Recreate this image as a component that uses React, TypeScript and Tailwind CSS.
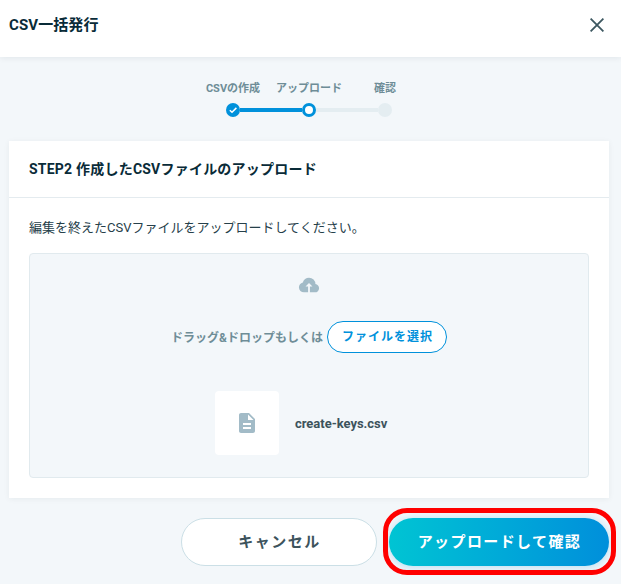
const steps = [
  { label: "CSVの作成", state: "done" },
  { label: "アップロード", state: "current" },
  { label: "確認", state: "todo" },
];

function StepDot({ state }: { state: string }) {
  if (state === "done") {
    return (
      <span className="flex h-3.5 w-3.5 items-center justify-center rounded-full bg-[#0091db]">
        <svg width="10" height="8" viewBox="0 0 10 8" fill="none" stroke="#fff" strokeWidth="1.5">
          <path d="M1.8 4.2 L4 6.2 L8.4 1.9" />
        </svg>
      </span>
    );
  }
  if (state === "current") {
    return <span className="h-3.5 w-3.5 rounded-full border-3 border-[#0091db] bg-white" />;
  }
  return <span className="h-3.5 w-3.5 rounded-full bg-[#e4edf1]" />;
}

function Stepper() {
  return (
    <div className="flex h-[84px] justify-center pt-6 pr-[3px]">
      <div className="w-[228px]">
        <div className="grid grid-cols-3 text-center text-[11px] leading-4 font-bold text-[#6e8d97]">
          {steps.map((step) => (
            <span key={step.label} className="whitespace-nowrap">
              {step.label}
            </span>
          ))}
        </div>
        <div className="mx-auto mt-1.5 flex w-[166px] items-center">
          <StepDot state="done" />
          <span className="h-1 flex-1 bg-[#0091db]" />
          <StepDot state="current" />
          <span className="h-1 flex-1 bg-[#e4edf1]" />
          <StepDot state="todo" />
        </div>
      </div>
    </div>
  );
}

function DropZone() {
  return (
    <div className="mt-[15px] flex h-[225px] flex-col items-center rounded border border-[#e1eaee] bg-[#f3f7fa] pt-5">
      {/* cloud upload */}
      <svg width="22" height="22" viewBox="0 0 24 24" fill="#a2bbc7">
        <path d="M11 20H6.5q-2.275 0-3.888-1.575T1 14.575q0-1.95 1.175-3.475T5.25 9.15q.625-2.3 2.5-3.725T12 4q2.925 0 4.963 2.038T19 11q1.725.2 2.863 1.488T23 15.5q0 1.875-1.313 3.188T18.5 20H13v-6.500h2.800L12 9.700l-3.800 3.800H11z" />
      </svg>
      <div className="mt-[25px] flex items-center gap-1">
        <span className="pt-0.5 text-xs font-bold text-[#6e8d97]">ドラッグ&amp;ドロップもしくは</span>
        <button className="h-8 w-[120px] rounded-full border border-[#0091db] bg-white pl-px text-xs font-bold tracking-[1px] text-[#0091db]">
          ファイルを選択
        </button>
      </div>
      <div className="mt-[38px] flex w-[188px] items-center gap-4">
        <div className="flex h-16 w-16 shrink-0 items-center justify-center rounded bg-white">
          <svg width="24" height="24" viewBox="0 0 24 24" fill="#a2bbc7">
            <path d="M14 2H6c-1.1 0-1.99.9-1.99 2L4 20c0 1.1.89 2 1.99 2H18c1.1 0 2-.9 2-2V8l-6-6zm2 16H8v-2h8v2zm0-4H8v-2h8v2zm-3-5V3.5L18.5 9H13z" />
          </svg>
        </div>
        <span className="pt-0.5 text-[13px] font-bold tracking-[-0.03px] text-[#3c535c]">create-keys.csv</span>
      </div>
    </div>
  );
}

export default function App() {
  return (
    <div className="h-[584px] w-[621px] overflow-hidden bg-[#f3f7fa] font-['Roboto','Noto_Sans_CJK_JP',sans-serif] text-[#092b38]">
      <header className="flex h-[57px] items-start justify-between bg-white pt-[13px] pr-[17px] pl-[9px] shadow-[0_1px_6px_rgba(9,43,56,0.08)]">
        <h1 className="text-[15px] leading-6 font-bold tracking-[0.1px]">CSV一括発行</h1>
        <button className="mt-[5px]" aria-label="閉じる">
          <svg width="14" height="14" viewBox="0 0 14 14" stroke="#3c5760" strokeWidth="1.8">
            <path d="M0.6 0.6 L13.4 13.4 M13.4 0.6 L0.6 13.4" />
          </svg>
        </button>
      </header>

      <Stepper />

      <section className="mr-3 ml-[9px] h-[357px] bg-white shadow-[0_1px_6px_rgba(9,43,56,0.06)]">
        <h2 className="flex h-[57px] items-center border-b border-[#e4ebef] px-5 text-sm font-bold tracking-[0.22px]">
          STEP2 作成したCSVファイルのアップロード
        </h2>
        <div className="px-5 pt-5">
          <p className="text-[13px] leading-5 text-[#26404a]">編集を終えたCSVファイルをアップロードしてください。</p>
          <DropZone />
        </div>
      </section>

      <footer className="mt-5 mr-3 flex justify-end gap-3">
        <button className="h-12 w-[196px] rounded-full border border-[#cbdfe6] bg-white pl-px text-[15px] font-bold tracking-[1.5px] text-[#3c535c]">
          キャンセル
        </button>
        <div className="relative">
          <button className="h-12 w-[220px] rounded-full bg-linear-to-r from-[#00c4d3] to-[#008fdb] pl-px text-[15px] font-bold tracking-[1.4px] text-white shadow-[0_1px_8px_rgba(0,145,219,0.25)]">
            アップロードして確認
          </button>
          <span className="pointer-events-none absolute -top-2.5 -right-[7px] -bottom-[9px] -left-1.5 rounded-[24px] border-5 border-[#ff0000]" />
        </div>
      </footer>
    </div>
  );
}
